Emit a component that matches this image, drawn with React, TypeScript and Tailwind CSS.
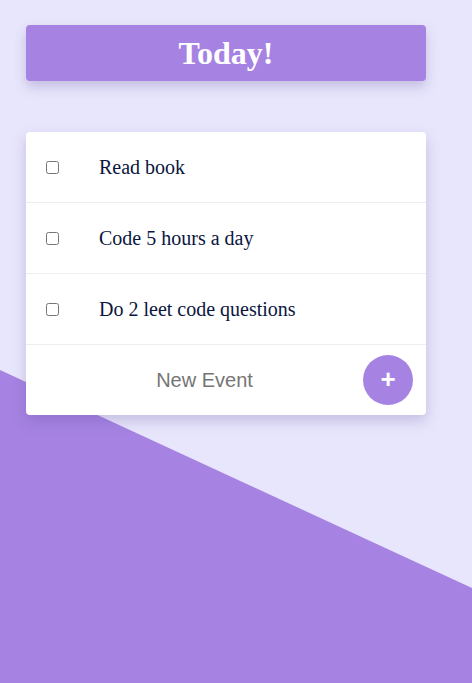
import React, { useState } from 'react';

interface Task {
  id: number;
  title: string;
  done: boolean;
}

const initialTasks: Task[] = [
  { id: 1, title: 'Read book', done: false },
  { id: 2, title: 'Code 5 hours a day', done: false },
  { id: 3, title: 'Do 2 leet code questions', done: false },
];

export default function App() {
  const [tasks, setTasks] = useState<Task[]>(initialTasks);
  const [draft, setDraft] = useState('');

  const addTask = () => {
    if (!draft.trim()) return;
    setTasks([...tasks, { id: Date.now(), title: draft.trim(), done: false }]);
    setDraft('');
  };

  return (
    <div className="relative min-h-[683px] overflow-hidden bg-[#e8e6fc] font-['Liberation_Serif',serif]">
      {/* Background wedge */}
      <div className="absolute inset-0 bg-[#a683e2] [clip-path:polygon(0_370px,100%_588px,100%_100%,0_100%)]" />

      <div className="relative flex flex-col px-[26px] pt-[25px]">
        {/* Header */}
        <div className="flex h-[56px] w-[400px] items-center justify-center rounded bg-[#a683e2] shadow-[0_6px_12px_rgba(90,70,150,0.25)]">
          <h1 className="text-[32px] font-bold leading-none text-white">Today!</h1>
        </div>

        {/* Task list */}
        <div className="mt-[51px] w-[400px] rounded bg-white shadow-[0_6px_14px_rgba(90,70,150,0.25)]">
          {tasks.map((task) => (
            <div key={task.id} className="flex h-[71px] items-center border-b border-[#eeeeee] pl-5">
              <input
                type="checkbox"
                checked={task.done}
                onChange={() =>
                  setTasks(tasks.map((t) => (t.id === task.id ? { ...t, done: !t.done } : t)))
                }
                className="m-0 h-[13px] w-[13px]"
              />
              <span className="ml-10 text-[20px] text-[#0b1640]">{task.title}</span>
            </div>
          ))}

          {/* New event row */}
          <div className="flex h-[70px] items-center">
            <input
              value={draft}
              onChange={(e) => setDraft(e.target.value)}
              placeholder="New Event"
              className="min-w-0 flex-1 bg-transparent pl-10 text-center font-['Liberation_Sans',sans-serif] text-[20px] outline-none placeholder:text-[#757575]"
            />
            <button
              onClick={addTask}
              className="ml-5 mr-[13px] flex h-[50px] w-[50px] items-center justify-center rounded-full bg-[#a683e2] pb-[3px] font-['Liberation_Sans',sans-serif] text-[26px] font-bold leading-none text-white"
            >
              +
            </button>
          </div>
        </div>
      </div>
    </div>
  );
}
